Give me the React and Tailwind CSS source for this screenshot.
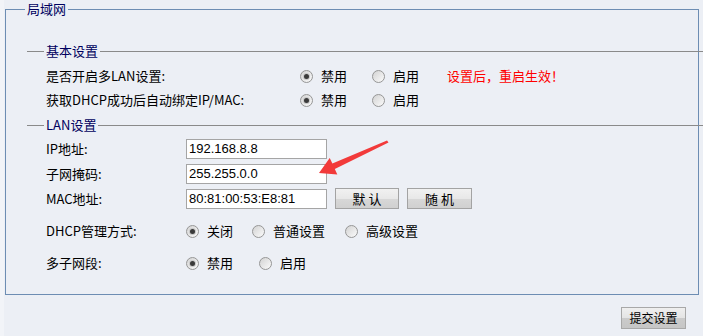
import React from "react";

function Radio({ checked, label, w }) {
  return (
    <div className={`flex items-center shrink-0 ${w}`}>
      <span className="w-[13px] h-[13px] rounded-full border border-[#969696] bg-linear-to-br from-[#d3d3d3] to-[#fbfbfb] flex items-center justify-center shrink-0">
        {checked && (
          <span className="w-[7px] h-[7px] rounded-full bg-[#c8c8c8] flex items-center justify-center">
            <span className="w-[5px] h-[5px] rounded-full bg-[#3a3a3a]" />
          </span>
        )}
      </span>
      <span className="ml-[8px] text-[13px] leading-[16px] text-black">{label}</span>
    </div>
  );
}

function Btn({ children, w }) {
  return (
    <button
      className={`${w} h-[21px] ml-[8px] border border-[#a3a3a3] bg-[linear-gradient(#f1f1f1_0%,#e8e8e8_50%,#d8d8d8_50%,#d0d0d0_100%)] text-[13px] leading-[19px] text-black`}
    >
      {children}
    </button>
  );
}

function Input({ value }) {
  return (
    <div className="w-[141px] h-[20px] border border-[#a5a5a5] bg-white pl-[2px] flex items-center font-['Liberation_Sans',sans-serif] text-[13px] text-black">
      {value}
    </div>
  );
}

export default function App() {
  return (
    <div className="relative w-[703px] h-[336px] overflow-hidden bg-[#eceff5] border-l-[4px] border-[#f2f4f8] font-['Noto_Sans_CJK_SC','Noto_Sans',sans-serif]">
      <fieldset className="ml-[1px] mr-[4px] border border-[#6d8db3] min-w-0 p-0">
        <legend className="ml-[19px] px-[2px] h-[18px] leading-[18px] text-[13px] text-[#00005e]">局域网</legend>

        <fieldset className="mt-[25px] ml-[21px] mr-[-6px] border-0 border-t border-[#8a8a8a] min-w-0 p-0">
          <legend className="ml-[17px] px-[2px] h-[16px] leading-[16px] text-[13px] text-[#00005e]">基本设置</legend>
          <div className="pt-[5px] pl-[19px]">
            <div className="flex items-center h-[24px]">
              <div className="w-[254px] text-[13px] leading-[16px] text-black">是否开启多LAN设置:</div>
              <Radio checked label="禁用" w="w-[72px]" />
              <Radio label="启用" w="w-[75px]" />
              <span className="text-[13px] leading-[16px] text-[#ff0000]">设置后，重启生效！</span>
            </div>
            <div className="flex items-center h-[24px]">
              <div className="w-[254px] text-[13px] leading-[16px] text-black">获取DHCP成功后自动绑定IP/MAC:</div>
              <Radio checked label="禁用" w="w-[72px]" />
              <Radio label="启用" w="w-[75px]" />
            </div>
          </div>
        </fieldset>

        <fieldset className="mt-[5px] ml-[21px] mr-[-6px] border-0 border-t border-[#8a8a8a] min-w-0 p-0">
          <legend className="ml-[17px] px-[2px] h-[16px] leading-[16px] text-[13px] text-[#00005e]">LAN设置</legend>
          <div className="pt-[3px] pl-[19px] pb-[19px]">
            <div className="flex items-center h-[25px]">
              <div className="w-[140px] text-[13px] leading-[16px] text-black">IP地址:</div>
              <Input value="192.168.8.8" />
            </div>
            <div className="flex items-center h-[25px]">
              <div className="w-[140px] text-[13px] leading-[16px] text-black">子网掩码:</div>
              <Input value="255.255.0.0" />
            </div>
            <div className="flex items-center h-[25px]">
              <div className="w-[140px] text-[13px] leading-[16px] text-black">MAC地址:</div>
              <Input value="80:81:00:53:E8:81" />
              <Btn w="w-[64px]">默 认</Btn>
              <Btn w="w-[65px]">随 机</Btn>
            </div>
            <div className="flex items-center h-[24px] mt-[8px]">
              <div className="w-[140px] text-[13px] leading-[16px] text-black">DHCP管理方式:</div>
              <Radio checked label="关闭" w="w-[66px]" />
              <Radio label="普通设置" w="w-[93px]" />
              <Radio label="高级设置" w="w-[90px]" />
            </div>
            <div className="flex items-center h-[24px] mt-[8px]">
              <div className="w-[140px] text-[13px] leading-[16px] text-black">多子网段:</div>
              <Radio checked label="禁用" w="w-[73px]" />
              <Radio label="启用" w="w-[60px]" />
            </div>
          </div>
        </fieldset>
      </fieldset>

      <div className="flex justify-end pr-[17px] mt-[12px]">
        <button className="w-[65px] h-[22px] border border-[#a8a8a8] bg-[linear-gradient(#efefef_0%,#e4e4e4_50%,#cbcbcb_50%,#c6c6c6_100%)] text-[12px] leading-[20px] text-black">
          提交设置
        </button>
      </div>

      <svg className="absolute top-0 left-0 w-[703px] h-[336px] pointer-events-none" viewBox="0 0 703 336">
        <polygon
          points="315,173 325.7,158.1 328.4,163.6 383,140.5 384.5,142.5 330.8,169 333.3,174.5"
          fill="#f23a3a"
        />
      </svg>
    </div>
  );
}
